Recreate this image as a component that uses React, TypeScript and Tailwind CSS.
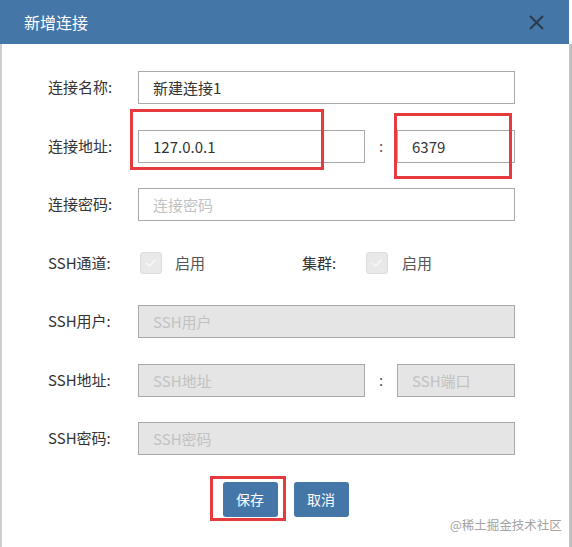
import React from 'react';

const font = { fontFamily: '"Noto Sans CJK SC", "Noto Sans", sans-serif' };

const inputBase =
  'h-[33px] border border-[#a9a9a9] px-[14px] text-[15px] outline-none placeholder:text-[#c2c2c2]';

const Label: React.FC<{ text: string }> = ({ text }) => (
  <span className="w-[90px] shrink-0 text-[15px] text-[#333]">{text}</span>
);

const CheckBox: React.FC = () => (
  <span className="flex h-[22px] w-[22px] items-center justify-center rounded-[3px] border border-[#dcdcdc] bg-[#e9e9e9]">
    <svg width="12" height="10" viewBox="0 0 12 10" fill="none">
      <path d="M1.5 5.2 L4.6 8 L10.5 1.8" stroke="#fafafa" strokeWidth="1.3" />
    </svg>
  </span>
);

const App: React.FC = () => {
  return (
    <div className="relative h-[547px] w-[572px] overflow-hidden bg-white" style={font}>
      <div className="flex h-full w-[569px] flex-col">
        {/* header */}
        <div className="flex h-[44px] shrink-0 items-center justify-between bg-[#4576a8] pl-[24px] pr-[25px]">
          <span className="text-[16px] text-white">新增连接</span>
          <svg width="15" height="15" viewBox="0 0 15 15">
            <path d="M1 1 L14 14 M14 1 L1 14" stroke="#2b3a4c" strokeWidth="2" />
          </svg>
        </div>

        {/* body */}
        <div className="flex flex-1 flex-col border-l-2 border-[#cdcdcd] pl-[46px] pt-[27px]">
          <div className="flex flex-col gap-[25.5px]">
            <div className="flex items-center">
              <Label text="连接名称:" />
              <input className={`${inputBase} w-[377px] text-[#333]`} defaultValue="新建连接1" />
            </div>

            <div className="flex items-center">
              <Label text="连接地址:" />
              <input className={`${inputBase} w-[227px] text-[#333]`} defaultValue="127.0.0.1" />
              <span className="w-[32px] text-center text-[15px] text-[#555]">:</span>
              <input className={`${inputBase} w-[118px] text-[#333]`} defaultValue="6379" />
            </div>

            <div className="flex items-center">
              <Label text="连接密码:" />
              <input className={`${inputBase} w-[377px]`} placeholder="连接密码" />
            </div>

            <div className="flex h-[33px] items-center">
              <span className="w-[92px] shrink-0 text-[15px] text-[#333]">SSH通道:</span>
              <CheckBox />
              <span className="ml-[13px] w-[127px] text-[15px] text-[#555]">启用</span>
              <span className="w-[64px] text-[15px] text-[#333]">集群:</span>
              <CheckBox />
              <span className="ml-[14px] text-[15px] text-[#555]">启用</span>
            </div>

            <div className="flex items-center">
              <Label text="SSH用户:" />
              <input disabled className={`${inputBase} w-[377px] bg-[#e5e5e5]`} placeholder="SSH用户" />
            </div>

            <div className="flex items-center">
              <Label text="SSH地址:" />
              <input disabled className={`${inputBase} w-[227px] bg-[#e5e5e5]`} placeholder="SSH地址" />
              <span className="w-[32px] text-center text-[15px] text-[#555]">:</span>
              <input disabled className={`${inputBase} w-[118px] bg-[#e5e5e5]`} placeholder="SSH端口" />
            </div>

            <div className="flex items-center">
              <Label text="SSH密码:" />
              <input disabled className={`${inputBase} w-[377px] bg-[#e5e5e5]`} placeholder="SSH密码" />
            </div>
          </div>

          <div className="mt-[27px] flex justify-center gap-[16px] pr-[46px]">
            <button className="h-[35px] w-[55px] rounded-[3px] bg-[#4576a8] text-[14px] text-white">保存</button>
            <button className="h-[35px] w-[55px] rounded-[3px] bg-[#4576a8] text-[14px] text-white">取消</button>
          </div>
        </div>
      </div>
      <div className="absolute right-0 top-[44px] h-[503px] w-[3px] bg-[#c2c2c2]" />

      {/* red annotation boxes */}
      <div className="absolute left-[130px] top-[109px] h-[61px] w-[194px] border-[3px] border-[#e63a3e]" />
      <div className="absolute left-[394px] top-[113px] h-[66px] w-[118px] border-[3px] border-[#e63a3e]" />
      <div className="absolute left-[210px] top-[476px] h-[45px] w-[76px] border-[3px] border-[#e63a3e]" />

      <span className="absolute left-[450px] top-[516px] text-[12.5px] text-[#a3a3a3]">@稀土掘金技术社区</span>
    </div>
  );
};

export default App;
